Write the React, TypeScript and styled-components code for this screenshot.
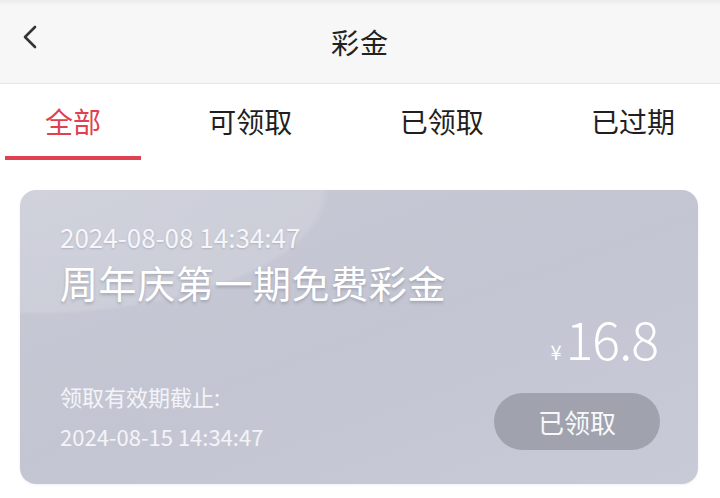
import styled, { createGlobalStyle } from "styled-components";

const GlobalStyle = createGlobalStyle`
  body {
    margin: 0;
    background: #ffffff;
    font-family: "Noto Sans CJK SC", "Noto Sans", sans-serif;
  }
`;

const Page = styled.div`
  width: 720px;
  height: 498px;
  overflow: hidden;
  background: #ffffff;
`;

const Header = styled.div`
  height: 83px;
  display: flex;
  align-items: center;
  justify-content: center;
  position: relative;
  background: linear-gradient(#ececec 0px, #f7f7f7 6px);
  border-bottom: 1px solid #e6e6e6;
`;

const BackButton = styled.div`
  position: absolute;
  left: 20px;
  top: 24px;
  width: 22px;
  height: 26px;
  display: flex;
`;

const Title = styled.div`
  font-size: 28px;
  color: #222222;
  letter-spacing: 1px;
`;

const Tabs = styled.div`
  display: flex;
  justify-content: space-between;
  padding: 0 5px;
  height: 76px;
`;

const Tab = styled.div<{ $active?: boolean }>`
  padding: 0 40px;
  display: flex;
  align-items: center;
  font-size: 28px;
  color: ${(props) => (props.$active ? "#e0404f" : "#1f1f1f")};
  border-bottom: 4px solid
    ${(props) => (props.$active ? "#e0404f" : "transparent")};
  box-sizing: border-box;
  padding-top: 2px;
`;

const Card = styled.div`
  margin: 30px 22px 0 20px;
  box-sizing: border-box;
  border-radius: 16px;
  padding: 32px 38px 34px 40px;
  display: flex;
  flex-direction: column;
  color: #ffffff;
  background:
    radial-gradient(
      ellipse 300px 125px at 10px 0px,
      rgba(255, 255, 255, 0.16) 0%,
      rgba(255, 255, 255, 0.12) 97%,
      rgba(255, 255, 255, 0) 100%
    ),
    linear-gradient(160deg, #c7c9d5 0%, #c3c6d2 50%, #c8cbd7 100%);
  box-shadow: 0 1px 3px rgba(0, 0, 0, 0.06);
`;

const IssueDate = styled.div`
  font-size: 26px;
  line-height: 30px;
  color: #f6f6fa;
  text-shadow: 0 1px 2px rgba(90, 90, 110, 0.25);
`;

const BonusName = styled.div`
  font-size: 38px;
  line-height: 44px;
  margin-top: 8px;
  letter-spacing: 0.6px;
  text-shadow: 0 2px 3px rgba(80, 80, 100, 0.3);
`;

const Bottom = styled.div`
  display: flex;
  justify-content: space-between;
  align-items: flex-end;
  margin-top: 6px;
`;

const Validity = styled.div`
  display: flex;
  flex-direction: column;
  gap: 12px;
  font-size: 22px;
  line-height: 28px;
  color: #f4f4f8;
`;

const Side = styled.div`
  display: flex;
  flex-direction: column;
  align-items: flex-end;
`;

const Amount = styled.div`
  height: 56px;
  display: flex;
  align-items: baseline;
  line-height: 56px;
  margin-right: 2px;
`;

const Currency = styled.span`
  font-size: 20px;
  margin-right: 4px;
`;

const Value = styled.span`
  font-size: 52px;
  font-weight: 300;
  letter-spacing: -1px;
`;

const StatusButton = styled.div`
  margin-top: 27px;
  width: 166px;
  height: 57px;
  border-radius: 29px;
  background: #a0a3ae;
  display: flex;
  align-items: center;
  justify-content: center;
  font-size: 26px;
  color: #f8f8fa;
`;

const tabs = ["全部", "可领取", "已领取", "已过期"];

export default function App() {
  return (
    <Page>
      <GlobalStyle />
      <Header>
        <BackButton>
          <svg width="22" height="26" viewBox="0 0 22 26">
            <path
              d="M15 3 L5 13 L15 23"
              fill="none"
              stroke="#333333"
              strokeWidth="2.6"
              strokeLinecap="round"
              strokeLinejoin="round"
            />
          </svg>
        </BackButton>
        <Title>彩金</Title>
      </Header>
      <Tabs>
        {tabs.map((t, i) => (
          <Tab key={t} $active={i === 0}>
            {t}
          </Tab>
        ))}
      </Tabs>
      <Card>
        <IssueDate>2024-08-08 14:34:47</IssueDate>
        <BonusName>周年庆第一期免费彩金</BonusName>
        <Bottom>
          <Validity>
            <span>领取有效期截止:</span>
            <span>2024-08-15 14:34:47</span>
          </Validity>
          <Side>
            <Amount>
              <Currency>¥</Currency>
              <Value>16.8</Value>
            </Amount>
            <StatusButton>已领取</StatusButton>
          </Side>
        </Bottom>
      </Card>
    </Page>
  );
}
